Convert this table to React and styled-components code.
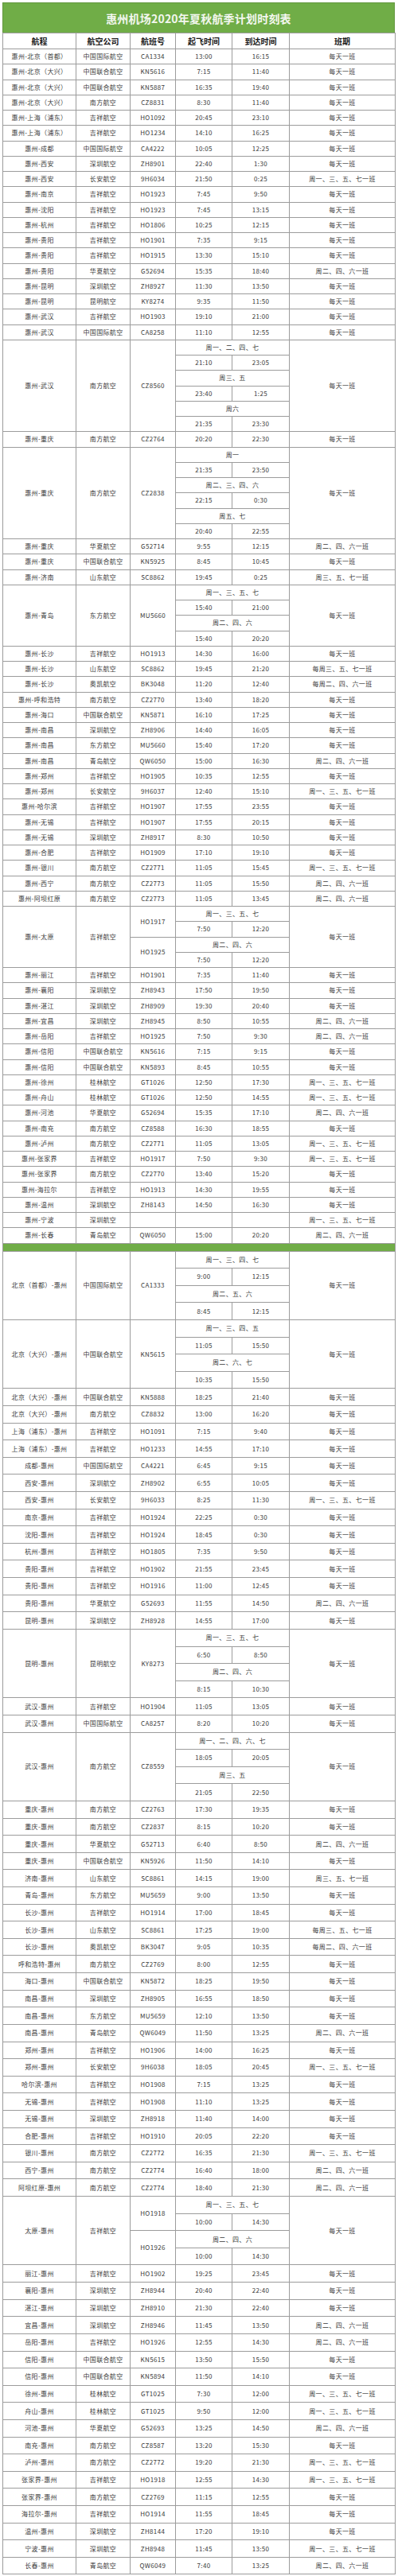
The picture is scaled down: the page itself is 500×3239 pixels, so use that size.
import React from 'react';
import styled, { createGlobalStyle } from 'styled-components';

const GREEN = '#70ad47';
const LINE = '#9c9c9c';

const GlobalStyle = createGlobalStyle`
  html, body {
    margin: 0;
    padding: 0;
    background: #fff;
  }
  body {
    padding: 3px;
    font-family: "Noto Sans CJK SC", "Noto Sans", sans-serif;
  }
`;

const Sheet = styled.div`
  width: 493px;
`;

const Title = styled.div`
  height: 38px;
  box-sizing: border-box;
  background: ${GREEN};
  border: 1px solid #62973e;
  border-bottom: none;
  color: #f3f7ef;
  font-size: 14px;
  font-weight: 700;
  display: flex;
  align-items: center;
  justify-content: center;
  letter-spacing: 0.2px;
`;

const Table = styled.table`
  width: 493px;
  border-collapse: collapse;
  table-layout: fixed;
`;

const Row = styled.tr`
  height: ${({ $h }) => $h}px;
`;

const Cell = styled.td`
  border: 1px solid ${LINE};
  padding: 0;
  text-align: center;
  vertical-align: middle;
  font-size: 8px;
  line-height: 1;
  letter-spacing: 0.35px;
  color: #3a3a3a;
  white-space: nowrap;
`;

const HeadCell = styled.th`
  border: 1px solid ${LINE};
  padding: 0;
  text-align: center;
  vertical-align: middle;
  font-size: 10px;
  font-weight: 700;
  line-height: 1;
  color: #161616;
`;

const Divider = styled.td`
  border: 1px solid ${LINE};
  background: ${GREEN};
  padding: 0;
`;

const D = '每天一班';
const A = '周一、三、五、七一班';
const B = '周二、四、六一班';
const C = '周三、五、七一班';

const outbound = [
  ['惠州-北京（首都）', '中国国际航空', 'CA1334', '13:00', '16:15', D],
  ['惠州-北京（大兴）', '中国联合航空', 'KN5616', '7:15', '11:40', D],
  ['惠州-北京（大兴）', '中国联合航空', 'KN5887', '16:35', '19:40', D],
  ['惠州-北京（大兴）', '南方航空', 'CZ8831', '8:30', '11:40', D],
  ['惠州-上海（浦东）', '吉祥航空', 'HO1092', '20:45', '23:10', D],
  ['惠州-上海（浦东）', '吉祥航空', 'HO1234', '14:10', '16:25', D],
  ['惠州-成都', '中国国际航空', 'CA4222', '10:05', '12:25', D],
  ['惠州-西安', '深圳航空', 'ZH8901', '22:40', '1:30', D],
  ['惠州-西安', '长安航空', '9H6034', '21:50', '0:25', A],
  ['惠州-南京', '吉祥航空', 'HO1923', '7:45', '9:50', D],
  ['惠州-沈阳', '吉祥航空', 'HO1923', '7:45', '13:15', D],
  ['惠州-杭州', '吉祥航空', 'HO1806', '10:25', '12:15', D],
  ['惠州-贵阳', '吉祥航空', 'HO1901', '7:35', '9:15', D],
  ['惠州-贵阳', '吉祥航空', 'HO1915', '13:30', '15:10', D],
  ['惠州-贵阳', '华夏航空', 'G52694', '15:35', '18:40', B],
  ['惠州-昆明', '深圳航空', 'ZH8927', '11:30', '13:50', D],
  ['惠州-昆明', '昆明航空', 'KY8274', '9:35', '11:50', D],
  ['惠州-武汉', '吉祥航空', 'HO1903', '19:10', '21:00', D],
  ['惠州-武汉', '中国国际航空', 'CA8258', '11:10', '12:55', D],
  {
    route: '惠州-武汉', airline: '南方航空', flight: 'CZ8560', sched: D,
    groups: [['周一、二、四、七', '21:10', '23:05'], ['周三、五', '23:40', '1:25'], ['周六', '21:35', '23:30']],
  },
  ['惠州-重庆', '南方航空', 'CZ2764', '20:20', '22:30', D],
  {
    route: '惠州-重庆', airline: '南方航空', flight: 'CZ2838', sched: D,
    groups: [['周一', '21:35', '23:50'], ['周二、三、四、六', '22:15', '0:30'], ['周五、七', '20:40', '22:55']],
  },
  ['惠州-重庆', '华夏航空', 'G52714', '9:55', '12:15', B],
  ['惠州-重庆', '中国联合航空', 'KN5925', '8:45', '10:45', D],
  ['惠州-济南', '山东航空', 'SC8862', '19:45', '0:25', C],
  {
    route: '惠州-青岛', airline: '东方航空', flight: 'MU5660', sched: D,
    groups: [['周一、三、五、七', '15:40', '21:00'], ['周二、四、六', '15:40', '20:20']],
  },
  ['惠州-长沙', '吉祥航空', 'HO1913', '14:30', '16:00', D],
  ['惠州-长沙', '山东航空', 'SC8862', '19:45', '21:20', '每周三、五、七一班'],
  ['惠州-长沙', '奥凯航空', 'BK3048', '11:20', '12:40', '每周二、四、六一班'],
  ['惠州-呼和浩特', '南方航空', 'CZ2770', '13:40', '18:20', D],
  ['惠州-海口', '中国联合航空', 'KN5871', '16:10', '17:25', D],
  ['惠州-南昌', '深圳航空', 'ZH8906', '14:40', '16:05', D],
  ['惠州-南昌', '东方航空', 'MU5660', '15:40', '17:20', D],
  ['惠州-南昌', '青岛航空', 'QW6050', '15:00', '16:30', B],
  ['惠州-郑州', '吉祥航空', 'HO1905', '10:35', '12:55', D],
  ['惠州-郑州', '长安航空', '9H6037', '12:40', '15:10', A],
  ['惠州-哈尔滨', '吉祥航空', 'HO1907', '17:55', '23:55', D],
  ['惠州-无锡', '吉祥航空', 'HO1907', '17:55', '20:15', D],
  ['惠州-无锡', '深圳航空', 'ZH8917', '8:30', '10:50', D],
  ['惠州-合肥', '吉祥航空', 'HO1909', '17:10', '19:10', D],
  ['惠州-银川', '南方航空', 'CZ2771', '11:05', '15:45', A],
  ['惠州-西宁', '南方航空', 'CZ2773', '11:05', '15:50', B],
  ['惠州-阿坝红原', '南方航空', 'CZ2773', '11:05', '13:45', B],
  {
    route: '惠州-太原', airline: '吉祥航空', sched: D,
    groups: [['周一、三、五、七', '7:50', '12:20', 'HO1917'], ['周二、四、六', '7:50', '12:20', 'HO1925']],
  },
  ['惠州-丽江', '吉祥航空', 'HO1901', '7:35', '11:40', D],
  ['惠州-襄阳', '深圳航空', 'ZH8943', '17:50', '19:50', D],
  ['惠州-湛江', '深圳航空', 'ZH8909', '19:30', '20:40', D],
  ['惠州-宜昌', '深圳航空', 'ZH8945', '8:50', '10:55', B],
  ['惠州-岳阳', '吉祥航空', 'HO1925', '7:50', '9:30', B],
  ['惠州-信阳', '中国联合航空', 'KN5616', '7:15', '9:15', D],
  ['惠州-信阳', '中国联合航空', 'KN5893', '8:45', '10:55', D],
  ['惠州-徐州', '桂林航空', 'GT1026', '12:50', '17:30', A],
  ['惠州-舟山', '桂林航空', 'GT1026', '12:50', '14:55', A],
  ['惠州-河池', '华夏航空', 'G52694', '15:35', '17:10', B],
  ['惠州-南充', '南方航空', 'CZ8588', '16:30', '18:55', D],
  ['惠州-泸州', '南方航空', 'CZ2771', '11:05', '13:05', A],
  ['惠州-张家界', '吉祥航空', 'HO1917', '7:50', '9:30', A],
  ['惠州-张家界', '南方航空', 'CZ2770', '13:40', '15:20', D],
  ['惠州-海拉尔', '吉祥航空', 'HO1913', '14:30', '19:55', D],
  ['惠州-温州', '深圳航空', 'ZH8143', '14:50', '16:30', D],
  ['惠州-宁波', '深圳航空', '', '', '', A],
  ['惠州-长春', '青岛航空', 'QW6050', '15:00', '20:20', B],
];

const inbound = [
  {
    route: '北京（首都）-惠州', airline: '中国国际航空', flight: 'CA1333', sched: D,
    groups: [['周一、三、四、七', '9:00', '12:15'], ['周二、五、六', '8:45', '12:15']],
  },
  {
    route: '北京（大兴）-惠州', airline: '中国联合航空', flight: 'KN5615', sched: D,
    groups: [['周一、三、四、五', '11:05', '15:50'], ['周二、六、七', '10:35', '15:50']],
  },
  ['北京（大兴）-惠州', '中国联合航空', 'KN5888', '18:25', '21:40', D],
  ['北京（大兴）-惠州', '南方航空', 'CZ8832', '13:00', '16:20', D],
  ['上海（浦东）-惠州', '吉祥航空', 'HO1091', '7:15', '9:40', D],
  ['上海（浦东）-惠州', '吉祥航空', 'HO1233', '14:55', '17:10', D],
  ['成都-惠州', '中国国际航空', 'CA4221', '6:45', '9:15', D],
  ['西安-惠州', '深圳航空', 'ZH8902', '6:55', '10:05', D],
  ['西安-惠州', '长安航空', '9H6033', '8:25', '11:30', A],
  ['南京-惠州', '吉祥航空', 'HO1924', '22:25', '0:30', D],
  ['沈阳-惠州', '吉祥航空', 'HO1924', '18:45', '0:30', D],
  ['杭州-惠州', '吉祥航空', 'HO1805', '7:35', '9:50', D],
  ['贵阳-惠州', '吉祥航空', 'HO1902', '21:55', '23:45', D],
  ['贵阳-惠州', '吉祥航空', 'HO1916', '11:00', '12:45', D],
  ['贵阳-惠州', '华夏航空', 'G52693', '11:55', '14:50', B],
  ['昆明-惠州', '深圳航空', 'ZH8928', '14:55', '17:00', D],
  {
    route: '昆明-惠州', airline: '昆明航空', flight: 'KY8273', sched: D,
    groups: [['周一、三、五、七', '6:50', '8:50'], ['周二、四、六', '8:15', '10:30']],
  },
  ['武汉-惠州', '吉祥航空', 'HO1904', '11:05', '13:05', D],
  ['武汉-惠州', '中国国际航空', 'CA8257', '8:20', '10:20', D],
  {
    route: '武汉-惠州', airline: '南方航空', flight: 'CZ8559', sched: D,
    groups: [['周一、二、四、六、七', '18:05', '20:05'], ['周三、五', '21:05', '22:50']],
  },
  ['重庆-惠州', '南方航空', 'CZ2763', '17:30', '19:35', D],
  ['重庆-惠州', '南方航空', 'CZ2837', '8:15', '10:20', D],
  ['重庆-惠州', '华夏航空', 'G52713', '6:40', '8:50', B],
  ['重庆-惠州', '中国联合航空', 'KN5926', '11:50', '14:10', D],
  ['济南-惠州', '山东航空', 'SC8861', '14:15', '19:00', C],
  ['青岛-惠州', '东方航空', 'MU5659', '9:00', '13:50', D],
  ['长沙-惠州', '吉祥航空', 'HO1914', '17:00', '18:45', D],
  ['长沙-惠州', '山东航空', 'SC8861', '17:25', '19:00', '每周三、五、七一班'],
  ['长沙-惠州', '奥凯航空', 'BK3047', '9:05', '10:35', '每周二、四、六一班'],
  ['呼和浩特-惠州', '南方航空', 'CZ2769', '8:00', '12:55', D],
  ['海口-惠州', '中国联合航空', 'KN5872', '18:25', '19:50', D],
  ['南昌-惠州', '深圳航空', 'ZH8905', '16:55', '18:50', D],
  ['南昌-惠州', '东方航空', 'MU5659', '12:10', '13:50', D],
  ['南昌-惠州', '青岛航空', 'QW6049', '11:50', '13:25', B],
  ['郑州-惠州', '吉祥航空', 'HO1906', '14:00', '16:25', D],
  ['郑州-惠州', '长安航空', '9H6038', '18:05', '20:45', A],
  ['哈尔滨-惠州', '吉祥航空', 'HO1908', '7:15', '13:25', D],
  ['无锡-惠州', '吉祥航空', 'HO1908', '11:10', '13:25', D],
  ['无锡-惠州', '深圳航空', 'ZH8918', '11:40', '14:00', D],
  ['合肥-惠州', '吉祥航空', 'HO1910', '20:05', '22:20', D],
  ['银川-惠州', '南方航空', 'CZ2772', '16:35', '21:30', A],
  ['西宁-惠州', '南方航空', 'CZ2774', '16:40', '18:00', B],
  ['阿坝红原-惠州', '南方航空', 'CZ2774', '18:40', '21:30', B],
  {
    route: '太原-惠州', airline: '吉祥航空', sched: D,
    groups: [['周一、三、五、七', '10:00', '14:30', 'HO1918'], ['周二、四、六', '10:00', '14:30', 'HO1926']],
  },
  ['丽江-惠州', '吉祥航空', 'HO1902', '19:25', '23:45', D],
  ['襄阳-惠州', '深圳航空', 'ZH8944', '20:40', '22:40', D],
  ['湛江-惠州', '深圳航空', 'ZH8910', '21:30', '22:40', D],
  ['宜昌-惠州', '深圳航空', 'ZH8946', '11:45', '13:50', B],
  ['岳阳-惠州', '吉祥航空', 'HO1926', '12:55', '14:30', B],
  ['信阳-惠州', '中国联合航空', 'KN5615', '13:50', '15:50', D],
  ['信阳-惠州', '中国联合航空', 'KN5894', '11:50', '14:10', D],
  ['徐州-惠州', '桂林航空', 'GT1025', '7:30', '12:00', A],
  ['舟山-惠州', '桂林航空', 'GT1025', '9:50', '12:00', A],
  ['河池-惠州', '华夏航空', 'G52693', '13:25', '14:50', B],
  ['南充-惠州', '南方航空', 'CZ8587', '13:20', '15:30', D],
  ['泸州-惠州', '南方航空', 'CZ2772', '19:20', '21:30', A],
  ['张家界-惠州', '吉祥航空', 'HO1918', '12:55', '14:30', A],
  ['张家界-惠州', '南方航空', 'CZ2769', '11:15', '12:55', D],
  ['海拉尔-惠州', '吉祥航空', 'HO1914', '11:55', '18:45', D],
  ['温州-惠州', '深圳航空', 'ZH8144', '17:20', '19:10', D],
  ['宁波-惠州', '深圳航空', 'ZH8948', '11:45', '13:50', A],
  ['长春-惠州', '青岛航空', 'QW6049', '7:40', '13:25', B],
];

const columns = [92, 68, 57, 71, 72, 133];
const headings = ['航程', '航空公司', '航班号', '起飞时间', '到达时间', '班期'];

const renderEntry = (entry, h, key) => {
  if (Array.isArray(entry)) {
    return (
      <Row $h={h} key={key}>
        {entry.map((text, i) => <Cell key={i}>{text}</Cell>)}
      </Row>
    );
  }
  const span = entry.groups.length * 2;
  const rows = [];
  entry.groups.forEach(([days, dep, arr, flight], i) => {
    const first = i === 0;
    rows.push(
      <Row $h={h} key={`${key}-${i}a`}>
        {first && <Cell rowSpan={span}>{entry.route}</Cell>}
        {first && <Cell rowSpan={span}>{entry.airline}</Cell>}
        {entry.flight
          ? first && <Cell rowSpan={span}>{entry.flight}</Cell>
          : <Cell rowSpan={2}>{flight}</Cell>}
        <Cell colSpan={2}>{days}</Cell>
        {first && <Cell rowSpan={span}>{entry.sched}</Cell>}
      </Row>,
      <Row $h={h} key={`${key}-${i}b`}>
        <Cell>{dep}</Cell>
        <Cell>{arr}</Cell>
      </Row>
    );
  });
  return rows;
};

export default function App() {
  return (
    <Sheet>
      <GlobalStyle />
      <Title>惠州机场2020年夏秋航季计划时刻表</Title>
      <Table>
        <colgroup>
          {columns.map((w, i) => <col key={i} style={{ width: w }} />)}
        </colgroup>
        <tbody>
          <Row $h={20}>
            {headings.map((t) => <HeadCell key={t}>{t}</HeadCell>)}
          </Row>
          {outbound.map((e, i) => renderEntry(e, 19.26, `o${i}`))}
          <Row $h={10}>
            <Divider colSpan={6} />
          </Row>
          {inbound.map((e, i) => renderEntry(e, 21.61, `i${i}`))}
        </tbody>
      </Table>
    </Sheet>
  );
}
